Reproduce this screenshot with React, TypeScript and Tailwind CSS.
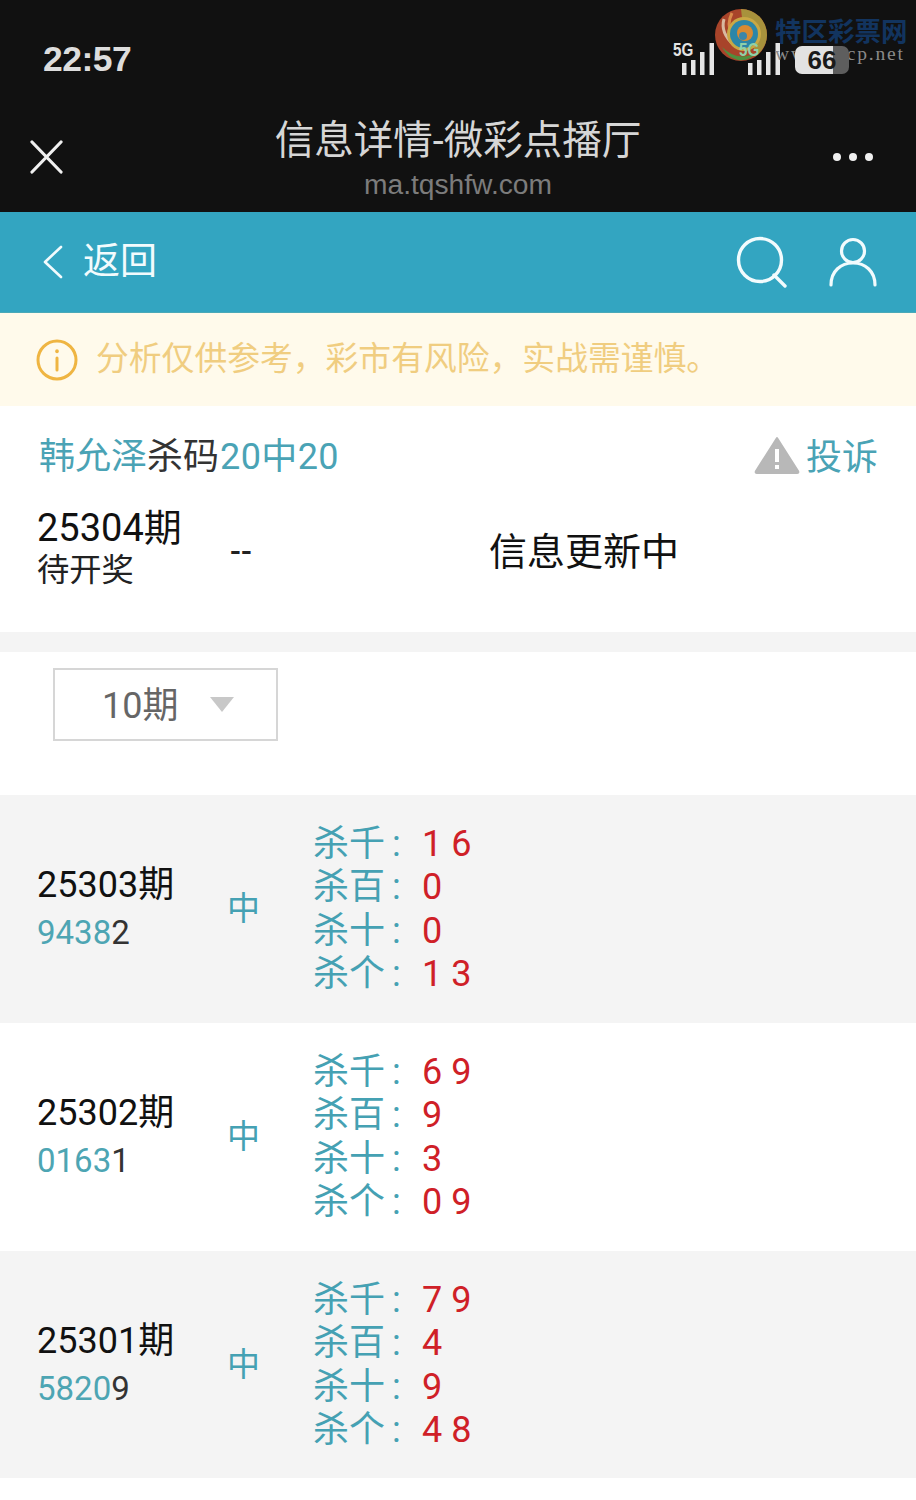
const font = { fontFamily: '"Roboto", "Noto Sans CJK SC", sans-serif' };

const rows = [
  { issue: "25303期", hit: "9438", rest: "2", kills: ["1 6", "0", "0", "1 3"], bg: "h-[228px] bg-[#f4f4f4]" },
  { issue: "25302期", hit: "0163", rest: "1", kills: ["6 9", "9", "3", "0 9"], bg: "h-[228px] bg-white" },
  { issue: "25301期", hit: "5820", rest: "9", kills: ["7 9", "4", "9", "4 8"], bg: "h-[227px] pt-[1px] bg-[#f4f4f4]" },
];
const labels = ["杀千", "杀百", "杀十", "杀个"];

function Bars() {
  return (
    <svg width="33" height="32" viewBox="0 0 33 32">
      <g fill="#e6e6e6">
        <rect x="0" y="20" width="4.5" height="12" />
        <rect x="9" y="17" width="4.5" height="15" />
        <rect x="18" y="9" width="4.5" height="23" />
        <rect x="27.5" y="0" width="4.5" height="32" />
      </g>
    </svg>
  );
}

export default function App() {
  return (
    <div className="w-[916px] h-[1500px] bg-white overflow-hidden relative" style={font}>
      {/* wechat chrome */}
      <div className="h-[212px] bg-[#111111] relative">
        <div className="h-[100px] pl-[43px] pt-[44px] flex justify-between items-start">
          <span className="text-[35.5px] leading-[30px] font-bold text-[#dddddd] font-['Liberation_Sans'] tracking-[-0.5px]">22:57</span>
          <div className="flex items-start w-[243px] -mt-[1px] pl-[9px]">
            <Bars />
            <div className="ml-[33px]">
              <Bars />
            </div>
            <div className="relative z-10 w-[54px] h-[28px] ml-[14px] mt-[3px] rounded-[7px] bg-[linear-gradient(90deg,#e2e2e2_70%,#5e5e5e_70%)] flex items-center justify-center text-[26px] font-bold text-[#1a1a1a] font-['Liberation_Sans']">
              66
            </div>
          </div>
        </div>
        <div className="flex justify-between items-center pl-[30px] pr-[43px] absolute left-0 right-0 top-[140px] h-[34px]">
          <svg width="33" height="34" viewBox="0 0 33 34" fill="none" stroke="#f0f0f0" strokeWidth="3.2" strokeLinecap="round">
            <path d="M2 2 L31 32 M31 2 L2 32" />
          </svg>
          <div className="flex gap-[8px]">
            <span className="w-[8px] h-[8px] rounded-full bg-[#f0f0f0]" />
            <span className="w-[8px] h-[8px] rounded-full bg-[#f0f0f0]" />
            <span className="w-[8px] h-[8px] rounded-full bg-[#f0f0f0]" />
          </div>
        </div>
        <div className="absolute left-0 right-0 top-[116px] flex flex-col items-center">
          <div className="text-[39.5px] leading-[50px] text-[#d6d6d6] whitespace-nowrap">信息详情-微彩点播厅</div>
          <div className="text-[28.2px] leading-[36px] text-[#7c7c7c] font-['Liberation_Sans']">ma.tqshfw.com</div>
        </div>
      </div>

      {/* top bar */}
      <div className="h-[101px] bg-[#33a5c1] border-b border-[#4aa9b8] flex items-center pl-[42px] pr-[39px] justify-between">
        <div className="flex items-center gap-[19px]">
          <svg width="22" height="34" viewBox="0 0 22 34" fill="none" stroke="#f2fbfd" strokeWidth="2.6" strokeLinecap="round" strokeLinejoin="round">
            <path d="M19 2 L3 17 L19 32" />
          </svg>
          <span className="text-[37px] leading-[44px] text-[#f2fbfd]">返回</span>
        </div>
        <div className="flex items-center gap-[41px]">
          <svg width="52" height="52" viewBox="0 0 52 52" fill="none" stroke="#f2fbfd" strokeWidth="3.4" strokeLinecap="round">
            <circle cx="24" cy="24" r="21.5" />
            <path d="M38 39 L49 50" />
          </svg>
          <svg width="48" height="50" viewBox="0 0 48 50" fill="none" stroke="#f2fbfd" strokeWidth="3.2" strokeLinecap="round">
            <circle cx="24" cy="14" r="11.5" />
            <path d="M2 48 C2 34 12 26 24 26 C36 26 46 34 46 48" />
          </svg>
        </div>
      </div>

      {/* notice */}
      <div className="h-[93px] bg-[#fffaeb] flex items-center pl-[36px] gap-[18px]">
        <svg width="42" height="42" viewBox="0 0 42 42" fill="none" stroke="#efb542" strokeWidth="3" strokeLinecap="round">
          <circle cx="21" cy="21" r="19" />
          <path d="M21 19 V31" />
          <path d="M21 12 V12.5" strokeWidth="3.6" />
        </svg>
        <span className="text-[32.8px] leading-[44px] text-[#f0cd80] -mt-[2px] whitespace-nowrap">
          {"分析仅供参考\uFF0C彩市有风险\uFF0C实战需谨慎\u3002"}
        </span>
      </div>

      {/* current */}
      <div className="h-[226px] bg-white pr-[38px] pt-[29px]">
        <div className="flex justify-between items-center h-[44px] pl-[39px]">
          <div className="text-[36px] leading-[44px] text-[#4aa3b5] whitespace-nowrap">
            韩允泽<span className="text-[#333333]">杀码</span>
            <span className="tracking-[0.4px] ml-[1px]">20中20</span>
          </div>
          <div className="flex items-center gap-[6px]">
            <svg width="46" height="38" viewBox="0 0 46 38" className="-mt-[5px]">
              <path d="M23 2 L44 35 Q45 37 43 37 L3 37 Q1 37 2 35 Z" fill="#b8b8b8" stroke="#b8b8b8" strokeWidth="2" strokeLinejoin="round" />
              <rect x="21" y="13" width="4" height="13" fill="#ffffff" />
              <rect x="21" y="29" width="4" height="4" fill="#ffffff" />
            </svg>
            <span className="text-[36px] leading-[44px] text-[#4aa3b5] mt-[1px]">投诉</span>
          </div>
        </div>
        <div className="flex mt-[27px] pl-[37px]">
          <div className="w-[193px] shrink-0">
            <div className="text-[38px] leading-[44px] text-[#111111]">25304期</div>
            <div className="text-[32.3px] leading-[40px] text-[#222222]">待开奖</div>
          </div>
          <div className="w-[259px] shrink-0 text-[32px] font-medium leading-[44px] text-[#222222] mt-[23px]">--</div>
          <div className="text-[38px] leading-[44px] text-[#111111] mt-[24px]">信息更新中</div>
        </div>
      </div>

      <div className="h-[20px] bg-[#f4f4f4]" />

      {/* select */}
      <div className="h-[143px] bg-white pl-[53px] pt-[16px]">
        <div className="w-[225px] h-[73px] border-2 border-[#d6d6d6] flex items-center pl-[47px] gap-[32px]">
          <span className="text-[36px] leading-[44px] text-[#666666] mt-[3px]">10期</span>
          <svg width="24" height="16" viewBox="0 0 24 16">
            <path d="M0 0 H24 L12 15 Z" fill="#c8c8c8" />
          </svg>
        </div>
      </div>

      {/* history */}
      {rows.map((row) => (
        <div key={row.issue} className={`flex items-center pl-[37px] ${row.bg}`}>
          <div className="w-[190px] shrink-0">
            <div className="text-[36px] leading-[44px] text-[#111111] -mt-[1px]">{row.issue}</div>
            <div className="text-[33px] leading-[44px] text-[#333333] mt-[4px]">
              <span className="text-[#4da5b3]">{row.hit}</span>
              {row.rest}
            </div>
          </div>
          <div className="w-[86px] shrink-0 text-[33px] leading-[44px] text-[#45a1b3]">中</div>
          <div className="flex flex-col">
            {labels.map((label, i) => (
              <div key={label} className="h-[43.3px] flex items-center text-[36px] whitespace-nowrap">
                <span className="w-[109px] shrink-0 text-[#45a1b3]">
                  {label}
                  <span className="ml-[7px]">:</span>
                </span>
                <span className="text-[#cf2027] whitespace-pre">{row.kills[i]}</span>
              </div>
            ))}
          </div>
        </div>
      ))}

      {/* status labels and site watermark on top of the chrome */}
      <span className="absolute left-[673px] top-[40px] text-[19px] leading-[20px] font-bold text-[#e4e4e4] font-['Liberation_Sans'] [transform:scaleX(0.8)] origin-left">
        5G
      </span>
      <svg width="54" height="52" viewBox="0 0 54 52" className="absolute left-[714px] top-[9px]">
        <circle cx="27" cy="26" r="26" fill="#a8442a" />
        <path d="M27 0 A26 26 0 0 1 53 26 A26 26 0 0 1 44 45 L30 26 Z" fill="#a8923c" />
        <path d="M10 10 Q6 24 20 36" fill="none" stroke="#d8b9a0" strokeWidth="3" />
        <path d="M18 4 Q12 16 18 26" fill="none" stroke="#d88a4a" strokeWidth="3" />
        <circle cx="30" cy="25" r="17" fill="#c9a845" />
        <circle cx="30" cy="25" r="14" fill="#2c86a8" />
        <circle cx="31" cy="24" r="8" fill="#d88a32" />
        <circle cx="29" cy="27" r="4" fill="#3c86a8" />
        <path d="M8 38 Q24 54 44 43 Q34 53 24 51 Q14 49 8 38 Z" fill="#4f8f3f" />
      </svg>
      <span className="absolute left-[739px] top-[40px] text-[19px] leading-[20px] font-bold text-[#8fd0a8] font-['Liberation_Sans'] [transform:scaleX(0.8)] origin-left">
        5G
      </span>
      <div className="absolute left-[775px] top-[14px] text-[26.5px] leading-[36px] font-bold text-[#12345f] whitespace-nowrap">特区彩票网</div>
      <div className="absolute left-[775px] top-[44px] text-[19.5px] leading-[20px] tracking-[1.8px] text-[#8a8a8a] font-['Liberation_Serif'] whitespace-nowrap">www.tqcp.net</div>
    </div>
  );
}
